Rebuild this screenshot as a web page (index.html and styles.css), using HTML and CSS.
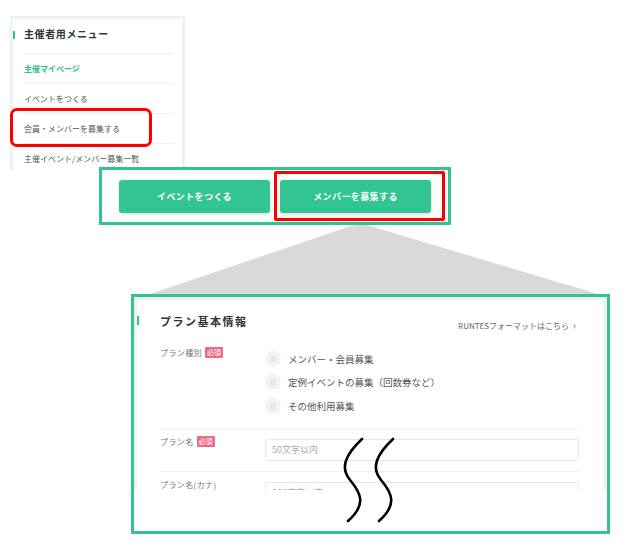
FILE: index.html
```html
<!DOCTYPE html>
<html lang="ja">
<head>
  <meta charset="UTF-8">
  <title>募集プラン作成の説明</title>
  <link rel="stylesheet" href="styles.css">
</head>
<body>
  <div class="figure">

    <!-- Organizer side menu (screenshot) -->
    <div class="menu-shot">
      <div class="menu-title">主催者用メニュー</div>
      <div class="menu-item active">主催マイページ</div>
      <div class="menu-item">イベントをつくる</div>
      <div class="menu-item">会員・メンバーを募集する</div>
      <div class="menu-item">主催イベント/メンバー募集一覧</div>
    </div>
    <div class="hl hl-menu"></div>

    <!-- zoom shape (behind callouts) -->
    <svg class="zoom-shape" width="627" height="557" viewBox="0 0 627 557">
      <polygon points="360,223 598,294 150,294" fill="#d9d9d9"/>
    </svg>

    <!-- Button strip callout -->
    <div class="btn-callout">
      <div class="btn">イベントをつくる</div>
      <div class="btn">メンバーを募集する</div>
    </div>
    <div class="hl hl-btn"></div>

    <!-- Form callout -->
    <div class="form-callout">
      <div class="form-shot">
        <div class="plan-head">
          <span class="plan-title">プラン基本情報</span>
          <span class="plan-link">RUNTESフォーマットはこちら <b>&rsaquo;</b></span>
        </div>

        <div class="form-row">
          <div class="form-label">プラン種別<span class="req">必須</span></div>
          <div class="radio-list">
            <div class="radio"><i></i>メンバー・会員募集</div>
            <div class="radio"><i></i>定例イベントの募集（回数券など）</div>
            <div class="radio"><i></i>その他利用募集</div>
          </div>
        </div>

        <div class="form-row">
          <div class="form-label">プラン名<span class="req">必須</span></div>
          <input class="text-input" type="text" placeholder="50文字以内">
        </div>

        <div class="form-row">
          <div class="form-label">プラン名(カナ)</div>
          <input class="text-input" type="text" placeholder="200文字以内">
        </div>
      </div>
    </div>

    <!-- omission marks -->
    <svg class="squiggle" width="627" height="557" viewBox="0 0 627 557">
      <path d="M362 439 C345 455, 340 468, 350 480 C362 494, 366 505, 348 521" />
      <path d="M393 439 C376 455, 371 468, 381 480 C393 494, 397 505, 379 521" />
    </svg>

  </div>
</body>
</html>
```

FILE: styles.css
```css
* {
  margin: 0;
  padding: 0;
  box-sizing: border-box;
  font-family: "Noto Sans CJK JP", "Noto Sans", sans-serif;
}
body {
  background-color: #ffffff;
}

.figure {
  position: relative;
  width: 627px;
  height: 557px;
  overflow: hidden;
}

/* Side menu screenshot */
.menu-shot {
  position: absolute;
  left: 10px;
  top: 16px;
  width: 175px;
  height: 154px;
  border: 3px solid #eef2f6;
  border-bottom: none;
  padding: 0 8px 0 11px;
  background-color: #fff;
  overflow: hidden;
}

.menu-title {
  position: relative;
  padding: 8px 0 12px;
  font-size: 10px;
  line-height: 14px;
  font-weight: bold;
  letter-spacing: 0.6px;
  color: #333;
}

.menu-title::before {
  content: "";
  position: absolute;
  left: -11px;
  top: 12px;
  width: 2px;
  height: 8px;
  background-color: #33c494;
}

.menu-item {
  border-top: 1px solid #eef0f3;
  height: 30px;
  line-height: 30px;
  font-size: 8px;
  color: #555;
  white-space: nowrap;
}

.menu-item.active {
  color: #2fbf8f;
  font-weight: bold;
}

/* Red highlight frames */
.hl {
  position: absolute;
  border: 3px solid #ff0000;
  border-radius: 7px;
  z-index: 3;
}

.hl-menu {
  left: 10px;
  top: 108px;
  width: 142px;
  height: 39px;
}

.hl-btn {
  left: 274px;
  top: 171px;
  width: 171px;
  height: 50px;
  border-radius: 2px;
}

.zoom-shape {
  position: absolute;
  left: 0;
  top: 0;
  z-index: 1;
}

/* Button strip callout */
.btn-callout {
  position: absolute;
  left: 99px;
  top: 167px;
  width: 352px;
  height: 58px;
  border: 3px solid #33c494;
  background-color: #fff;
  display: flex;
  gap: 10px;
  padding: 10px 17px;
  z-index: 2;
}

.btn {
  width: 151px;
  height: 33px;
  line-height: 33px;
  text-align: center;
  background-color: #33c494;
  color: #fff;
  font-size: 9px;
  font-weight: bold;
  letter-spacing: 0.4px;
  border-radius: 3px;
  box-shadow: 0 2px 4px rgba(0, 0, 0, 0.12);
}

/* Form callout */
.form-callout {
  position: absolute;
  left: 131px;
  top: 294px;
  width: 479px;
  height: 240px;
  border: 3px solid #33c494;
  background-color: #fff;
  z-index: 2;
}

.form-shot {
  position: relative;
  height: 193px;
  border: 3px solid #eef1f5;
  border-bottom: none;
  overflow: hidden;
}

.form-shot::before {
  content: "";
  position: absolute;
  left: -1px;
  top: 16px;
  width: 3px;
  height: 9px;
  background-color: #33c494;
}

.plan-head {
  display: flex;
  justify-content: space-between;
  align-items: flex-start;
  height: 33px;
  padding: 14px 28px 0 23px;
}

.plan-title {
  font-size: 11px;
  line-height: 14px;
  font-weight: bold;
  letter-spacing: 1.5px;
  color: #333;
}

.plan-link {
  margin-top: 4px;
  font-size: 8px;
  line-height: 14px;
  color: #666;
}

.plan-link b {
  color: #33c494;
  font-size: 10px;
  margin-left: 2px;
}

.form-row {
  display: grid;
  grid-template-columns: 105px 1fr;
  margin: 7px 25px 0 23px;
  padding: 7px 0 10px;
  border-bottom: 1px solid #eef1f4;
}

.form-row + .form-row {
  margin-top: 0;
}

.form-row:first-of-type {
  padding: 12px 0 4px;
}

.form-label {
  font-size: 8px;
  line-height: 12px;
  letter-spacing: 0.4px;
  color: #777;
  white-space: nowrap;
}

.req {
  display: inline-block;
  margin-left: 3px;
  padding: 0 2px;
  height: 11px;
  line-height: 11px;
  font-size: 7px;
  color: #fff;
  background-color: #ec6a88;
  border-radius: 1px;
  letter-spacing: 0;
  vertical-align: top;
}

.radio {
  display: flex;
  align-items: center;
  height: 23.5px;
  font-size: 9.5px;
  color: #555;
}

.radio i {
  width: 16px;
  height: 16px;
  margin-right: 7px;
  border-radius: 50%;
  background-color: #eef1f5;
  box-shadow: inset 0 0 0 4px #f1f4f7;
  background-image: radial-gradient(circle, #e4e8ed 0 3px, transparent 3.5px);
}

.text-input {
  margin-top: 3px;
  height: 22px;
  border: 1px solid #e3e8ee;
  border-radius: 3px;
  padding: 0 6px;
  font-size: 9px;
  color: #444;
  outline: none;
}

.text-input::placeholder {
  color: #aaa;
}

/* omission marks */
.squiggle {
  position: absolute;
  left: 0;
  top: 0;
  z-index: 4;
}

.squiggle path {
  fill: none;
  stroke: #000;
  stroke-width: 2.6;
  stroke-linecap: round;
}
```
